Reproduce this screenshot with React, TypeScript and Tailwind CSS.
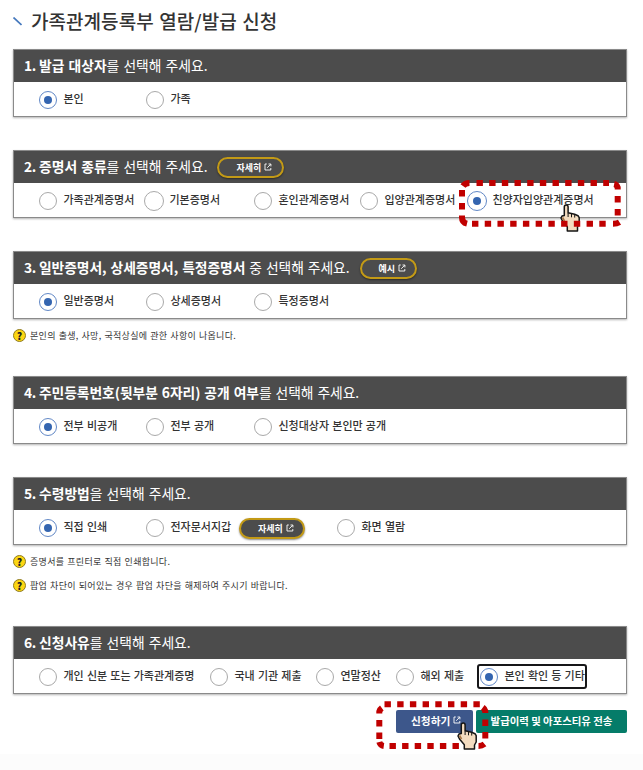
import type { ReactNode } from "react";

function ExternalIcon({ className = "" }: { className?: string }) {
  return (
    <svg viewBox="0 0 8 8" className={`h-2 w-2 shrink-0 ${className}`} fill="none" stroke="currentColor" strokeWidth="0.9">
      <path d="M2.800 1H1v6h5.800V5" />
      <path d="M3.200 4.800 6.600 1.300M4.500 1h2.400v2.400" />
    </svg>
  );
}

function Radio({ checked, large }: { checked?: boolean; large?: boolean }) {
  return (
    <span
      className={`flex shrink-0 items-center justify-center rounded-full border-[1.5px] bg-white ${
        large ? "-ml-px -mr-px h-5 w-5" : "h-[18px] w-[18px]"
      } ${checked ? "border-[#6288c6]" : "border-[#a9a9a9]"}`}
    >
      {checked && <span className="h-2 w-2 rounded-full bg-[#3465b0]" />}
    </span>
  );
}

type OptionProps = {
  label: string;
  checked?: boolean;
  large?: boolean;
  className?: string;
};

function Option({ label, checked, large, className = "" }: OptionProps) {
  return (
    <label className={`flex shrink-0 items-center gap-[6.5px] ${className}`}>
      <Radio checked={checked} large={large} />
      <span className="-mt-0.5 text-[11px] leading-none font-medium text-[#333] [word-spacing:0.7px]">{label}</span>
    </label>
  );
}

function PillButton({ children, className = "" }: { children: ReactNode; className?: string }) {
  return (
    <button
      className={`flex shrink-0 items-center gap-[3px] rounded-full border-2 border-[#c39a16] bg-[#4c4c4c] text-[9px] leading-none font-bold text-white shadow-[0_1px_2px_rgba(0,0,0,0.45)] ${className}`}
    >
      <span>{children}</span>
      <ExternalIcon className="-mt-px" />
    </button>
  );
}

type SectionProps = {
  step: number;
  bold: string;
  rest: string;
  action?: ReactNode;
  headingClass?: string;
  className?: string;
  children: ReactNode;
};

function Section({ step, bold, rest, action, headingClass = "", className = "", children }: SectionProps) {
  return (
    <section className={`h-[68px] border border-[#8a8a8a] bg-white shadow-[0_1px_2px_rgba(0,0,0,0.3)] ${className}`}>
      <div className="flex h-8 items-center bg-[#4c4c4c] pl-[10px] text-white">
        <h2 className={`flex text-[13.800px] leading-none font-normal whitespace-pre [word-spacing:1px] ${headingClass}`}>
          <b className="w-[15px] font-bold tracking-[-0.5px]">{step}.</b>
          <span>
            <b className="font-bold">{bold}</b>
            {rest}
          </span>
        </h2>
        {action}
      </div>
      <div className="flex h-[34px] items-center pl-[25px] pt-px">{children}</div>
    </section>
  );
}

function Note({ children, className = "" }: { children: ReactNode; className?: string }) {
  return (
    <p className={`flex h-[13px] items-center gap-1 text-[9px] leading-none text-[#333] ${className}`}>
      <span className="flex h-[13px] w-[13px] shrink-0 items-center justify-center rounded-full border border-[#8f7b20] bg-[#fcd612] text-[10px] leading-none font-black text-[#222]">
        ?
      </span>
      <span className="tracking-[0.300px] [word-spacing:0.600px]">{children}</span>
    </p>
  );
}

function Hand({ className }: { className: string }) {
  return (
    <svg viewBox="0 0 20 28" className={`absolute h-7 w-5 ${className}`}>
      <path
        d="M4.300 3q0-2 1.900-2t1.900 2v5.800l6.500 1.500 3.400 1.400 1.200 2v6.300L17.500 23v4H7.300v-4.300L2.500 17l-1.500-3 1-2 2.300-.5z"
        fill="#f3dcc0"
        stroke="#151515"
        strokeWidth="1.500"
        strokeLinejoin="round"
      />
      <path d="M8.100 9v4M11.500 10v3.300M14.700 10.800v2.800" stroke="#151515" strokeWidth="1" fill="none" />
      <path d="M2.500 13.500 4.500 17" stroke="#a87848" strokeWidth="1.700" />
    </svg>
  );
}

export default function App() {
  return (
    <main
      className="relative h-[770px] w-[643px] overflow-hidden bg-white"
      style={{ fontFamily: '"Noto Sans CJK KR", "Noto Sans", sans-serif' }}
    >
      <div className="flex h-full flex-col">
        <header className="flex h-[49px] shrink-0 items-center gap-[9px] pl-[13px]">
          <svg viewBox="0 0 9 9" className="mt-[-6px] h-[9px] w-[9px]" stroke="#4478bd" strokeWidth="1.700">
            <path d="M.5 .5 8.500 8" />
          </svg>
          <h1 className="-mt-2 text-[19px] leading-none font-medium tracking-[0.050px] whitespace-pre text-[#333] [word-spacing:1.200px]">
            가족관계등록부 열람/발급 신청
          </h1>
        </header>

        <div className="ml-[13px] flex w-[614px] flex-col">
          <Section step={1} bold="발급 대상자" rest="를 선택해 주세요.">
            <Option label="본인" checked className="w-[107px]" />
            <Option label="가족" />
          </Section>

          <Section
            className="mt-[33px]"
            step={2}
            bold="증명서 종류"
            rest="를 선택해 주세요."
            action={<PillButton className="ml-[10px] h-[21px] w-[67px] pl-[17px]">자세히</PillButton>}
          >
            <Option label="가족관계증명서" className="w-[106px]" />
            <Option label="기본증명서" large className="w-[109px]" />
            <Option label="혼인관계증명서" className="w-[106px]" />
            <Option label="입양관계증명서" className="w-[108px]" />
            <Option label="친양자입양관계증명서" checked large />
          </Section>

          <Section
            className="mt-[33px]"
            headingClass="tracking-[-0.070px]"
            step={3}
            bold="일반증명서, 상세증명서, 특정증명서"
            rest=" 중 선택해 주세요."
            action={<PillButton className="ml-[10px] h-[21px] w-[57px] pl-[17px]">예시</PillButton>}
          >
            <Option label="일반증명서" checked className="w-[107px]" />
            <Option label="상세증명서" className="w-[108px]" />
            <Option label="특정증명서" />
          </Section>
          <Note className="mt-[10px]">본인의 출생, 사망, 국적상실에 관한 사항이 나옵니다.</Note>

          <Section
            className="mt-[34px]"
            headingClass="tracking-[-0.070px]"
            step={4}
            bold="주민등록번호(뒷부분 6자리) 공개 여부"
            rest="를 선택해 주세요."
          >
            <Option label="전부 비공개" checked className="w-[107px]" />
            <Option label="전부 공개" className="w-[108px]" />
            <Option label="신청대상자 본인만 공개" />
          </Section>

          <Section className="mt-[33px]" step={5} bold="수령방법" rest="을 선택해 주세요.">
            <Option label="직접 인쇄" checked className="w-[107px]" />
            <Option label="전자문서지갑" className="w-[93px]" />
            <PillButton className="mt-[2px] mr-8 h-[21px] w-[66px] pl-[17px]">자세히</PillButton>
            <Option label="화면 열람" />
          </Section>
          <Note className="mt-[10px]">증명서를 프린터로 직접 인쇄합니다.</Note>
          <Note className="mt-[11px]">팝업 차단이 되어있는 경우 팝업 차단을 해제하여 주시기 바랍니다.</Note>

          <Section className="mt-[34px]" step={6} bold="신청사유" rest="를 선택해 주세요.">
            <Option label="개인 신분 또는 가족관계증명" className="w-[171px]" />
            <Option label="국내 기관 제출" className="w-[106px]" />
            <Option label="연말정산" className="w-20" />
            <Option label="해외 제출" className="w-[81px]" />
            <div className="flex h-[25px] w-[110px] items-center overflow-hidden rounded-[3px] border-2 border-[#171719] pl-px whitespace-nowrap">
              <Option label="본인 확인 등 기타" checked />
            </div>
          </Section>

          <div className="mt-4 flex justify-end gap-[3px]">
            <button className="flex h-[23px] w-[77px] items-center gap-[3px] rounded-[2px] bg-[#3d578b] pl-[15px] text-[10.700px] leading-none font-bold text-white">
              <span>신청하기</span>
              <ExternalIcon className="-mt-1" />
            </button>
            <button className="flex h-[23px] w-[151px] items-center justify-center rounded-[2px] bg-[#057c69] text-[10.400px] leading-none font-bold whitespace-nowrap text-white">
              <span>발급이력 및 아포스티유 전송</span>
            </button>
          </div>
        </div>
        <footer className="mt-auto h-[16px] bg-[#fcfcfc]" />
      </div>

      <Hand className="left-[560px] top-[204px]" />

      {/* Guide marker around the selected certificate */}
      <svg className="absolute left-[455px] top-[175px] h-[60px] w-[172px]" viewBox="455 175 172 60" fill="none" stroke="#c00000" strokeWidth="6">
        <path d="M476.500 183H609" strokeDasharray="6.400 6.270" />
        <path d="M472 223.700H606" strokeDasharray="6.400 6.330" />
        <path d="M462 190v6.400M462 203v6.400M617.700 196v6.400M617.700 209v6.400" />
        <path d="M463 186q2-3 6.500-3M462 215.500v2q0 5 5 6.200M617.700 189.500v-2q-1-3-3.500-3.500M613 223.700q4 0 6.500-1.500" />
      </svg>

      {/* Guide marker around the submit button */}
      <svg className="absolute left-[370px] top-[698px] h-[54px] w-[126px]" viewBox="370 698 126 54" fill="none" stroke="#c00000" strokeWidth="6">
        <path d="M384.500 704.300H480" strokeDasharray="6.400 6.300" />
        <path d="M389.500 746H460" strokeDasharray="6.400 6.200" />
        <path d="M379.300 720v6.400M379.300 732.500v6.400M485.300 719.500v6.400M485.300 732v6.400" />
        <path d="M379.300 713.500v-2q.5-2 2.500-3.500M379.300 742q1 3.500 4.500 4M485.300 713v-2q-.5-2-2.500-3.500M478.500 746q3.500 0 6-2" />
      </svg>

      <Hand className="left-[457px] top-[722px]" />
    </main>
  );
}
